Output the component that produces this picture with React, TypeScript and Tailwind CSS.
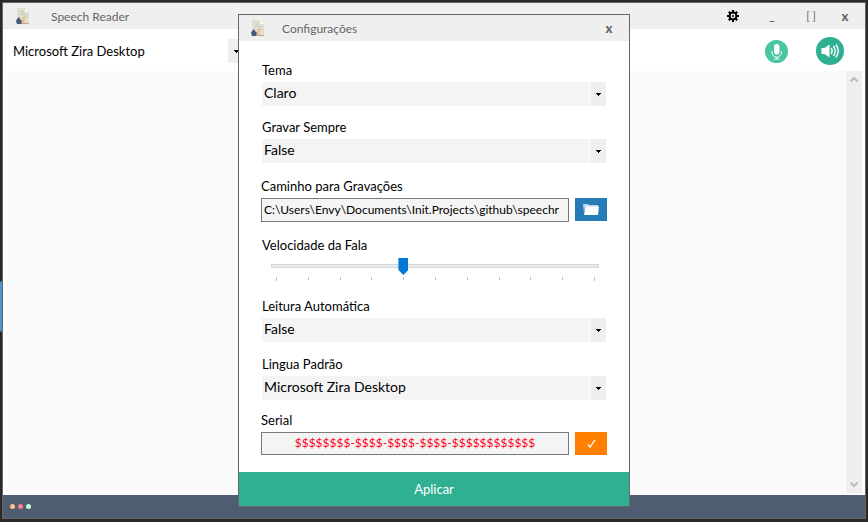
import { useState, type ReactNode } from "react";

const VOICES = ["Microsoft Zira Desktop", "Microsoft David Desktop", "Microsoft Maria Desktop"];
const TICKS = Array.from({ length: 11 }, (_, i) => i);

function AppIcon() {
  return (
    <svg width="14" height="18" viewBox="0 0 14 18" aria-hidden="true">
      <path d="M1 1h8l4 4v12H1z" fill="#dfdfcf" />
      <path d="M9 1l4 4H9z" fill="#f8f8f0" />
      <path d="M4 5h4M4 7.500h7M7 10h4" stroke="#c6cab8" strokeWidth="1" />
      <path d="M6 10l3 0 0 2-1 1 1 3H6z" fill="#efc08a" />
      <path d="M5 16.500h8" stroke="#c9a08a" strokeWidth="1" />
      <path d="M0 14l1-2 2-2 1 2 2 2-1 3H1z" fill="#43597c" />
    </svg>
  );
}

function GearIcon() {
  return (
    <svg width="12" height="12" viewBox="0 0 12 12" aria-hidden="true">
      <g fill="#000">
        <path d="M4.900 0h2.200v12H4.900zM0 4.900h12v2.200H0z" />
        <path d="M4.900 0h2.200v12H4.900zM0 4.900h12v2.200H0z" transform="rotate(45 6 6)" />
      </g>
      <circle cx="6" cy="6" r="3.400" fill="#efefef" stroke="#000" strokeWidth="2" />
      <circle cx="6" cy="6" r="1" fill="#000" />
    </svg>
  );
}

function MicIcon() {
  return (
    <svg width="23" height="23" viewBox="0 0 23 23" aria-hidden="true">
      <circle cx="11.500" cy="11.500" r="11.500" fill="#48c5a1" />
      <rect x="9" y="4" width="5.500" height="10.500" rx="2.750" fill="#fff" />
      <path d="M7 11v1.500a4.700 4.700 0 0 0 9.400 0V11M11.700 17v2M9 19h5.500" fill="none" stroke="#fff" strokeWidth="1" />
    </svg>
  );
}

function SpeakerIcon() {
  return (
    <svg width="28" height="28" viewBox="0 0 28 28" aria-hidden="true">
      <circle cx="14" cy="14" r="14" fill="#30b092" />
      <path d="M5.500 11h3l5-3.500v13L8.500 17h-3z" fill="#fff" />
      <path d="M15.200 11q2 3 0 6M17.500 9q3.500 5 0 10M20 7.500q4.500 6.500 0 13" fill="none" stroke="#fff" strokeWidth="1.400" />
    </svg>
  );
}

function FolderIcon() {
  return (
    <svg width="18" height="13" viewBox="0 0 18 13" aria-hidden="true">
      <path d="M1 1h5l1 1h9v2H3l-1 6z" fill="#b9d6ea" />
      <path d="M3.500 3.500H17l-1 8.500H2z" fill="#fff" />
    </svg>
  );
}

function Combo({ id, options, label, plain }: { id: string; options: string[]; label?: string; plain?: boolean }) {
  return (
    <div className="relative h-6 w-full">
      <select
        id={id}
        aria-label={label}
        className={
          plain
            ? "block h-full w-full appearance-none bg-white px-1 pr-5 text-[13px] leading-5 text-black outline-none"
            : "block h-full w-full appearance-none bg-[#f4f4f4] pb-0.5 pl-0.5 pr-5 text-sm leading-5 text-black outline-none"
        }
      >
        {options.map((o) => (
          <option key={o}>{o}</option>
        ))}
      </select>
      <span className="pointer-events-none absolute inset-y-0 right-0 flex w-[17px] items-center justify-center border-l border-white bg-[#efefef]">
        <svg width="5" height="3" viewBox="0 0 5 3" shapeRendering="crispEdges" aria-hidden="true">
          <path d="M0 0h5v1H4v1H3v1H2V2H1V1H0z" />
        </svg>
      </span>
    </div>
  );
}

function Label({ htmlFor, children }: { htmlFor: string; children: ReactNode }) {
  return (
    <label htmlFor={htmlFor} className="block h-5 text-[13px] leading-4">
      {children}
    </label>
  );
}

function ScrollArrow({ down }: { down?: boolean }) {
  return (
    <svg className={down ? "rotate-180" : ""} width="8" height="7" viewBox="0 0 8 7" aria-hidden="true">
      <path d="M.5 5.500L4 2l3.500 3.500" fill="none" stroke="#bcbcbc" strokeWidth="2.200" />
    </svg>
  );
}

function SettingsDialog() {
  const [speed, setSpeed] = useState(4);
  return (
    <section role="dialog" aria-label="Configurações" className="flex w-[392px] flex-col border border-[#666] bg-white">
      <header className="flex h-[26px] items-center bg-[#efefef] pl-3 pr-3.5 text-[#666]">
        <AppIcon />
        <h2 className="ml-[17px] flex-1 pt-0.5 text-xs leading-4">Configurações</h2>
        <button aria-label="Fechar configurações" className="w-3 text-[13px] font-black leading-4">x</button>
      </header>

      <div className="flex flex-col px-[23px] pb-[17px] pt-[21px]">
        <Label htmlFor="tema">Tema</Label>
        <Combo id="tema" options={["Claro", "Escuro"]} />

        <div className="mt-[13px]">
          <Label htmlFor="gravar">Gravar Sempre</Label>
          <Combo id="gravar" options={["False", "True"]} />
        </div>

        <div className="-mx-px mt-[15px]">
          <Label htmlFor="caminho">Caminho para Gravações</Label>
          <div className="flex gap-1.5">
            <input
              id="caminho"
              className="h-6 min-w-0 flex-1 border border-[#7a7a7a] bg-[#f4f4f4] px-0.5 pb-0.5 text-xs text-black outline-none"
              defaultValue="C:\Users\Envy\Documents\Init.Projects\github\speechr"
            />
            <button aria-label="Escolher pasta" className="flex h-[23px] w-8 items-center justify-center bg-[#257bb6]">
              <FolderIcon />
            </button>
          </div>
        </div>

        <div className="mt-[15px]">
          <Label htmlFor="velocidade">Velocidade da Fala</Label>
          <div className="ml-[9px] mr-[7px]">
            <input
              id="velocidade"
              type="range"
              min={0}
              max={10}
              value={speed}
              onChange={(e) => setSpeed(Number(e.target.value))}
              className="block h-[18px] w-full appearance-none bg-transparent outline-none [&::-webkit-slider-runnable-track]:h-1 [&::-webkit-slider-runnable-track]:border [&::-webkit-slider-runnable-track]:border-[#d6d6d6] [&::-webkit-slider-runnable-track]:bg-[#e7eaea] [&::-webkit-slider-thumb]:-mt-[7px] [&::-webkit-slider-thumb]:h-[17px] [&::-webkit-slider-thumb]:w-2.5 [&::-webkit-slider-thumb]:appearance-none [&::-webkit-slider-thumb]:bg-[#0078d7] [&::-webkit-slider-thumb]:[clip-path:polygon(0_0,100%_0,100%_70%,50%_100%,0_70%)]"
            />
            <div className="mt-0.5 flex h-1 justify-between pl-[5px] pr-1" aria-hidden="true">
              {TICKS.map((t) => (
                <span key={t} className="h-[3px] w-px bg-[#c4c4c4] first:h-1 last:h-1" />
              ))}
            </div>
          </div>
        </div>

        <div className="mt-[17px]">
          <Label htmlFor="leitura">Leitura Automática</Label>
          <Combo id="leitura" options={["False", "True"]} />
        </div>

        <div className="mt-3.5">
          <Label htmlFor="lingua">Lingua Padrão</Label>
          <Combo id="lingua" options={VOICES} />
        </div>

        <div className="-mx-px mt-3">
          <Label htmlFor="serial">Serial</Label>
          <div className="flex gap-1.5">
            <input
              id="serial"
              className="h-[23px] min-w-0 flex-1 border border-[#7a7a7a] bg-[#f4f4f4] pb-0.5 text-center text-xs text-[#ff0020] outline-none"
              defaultValue="$$$$$$$$-$$$$-$$$$-$$$$-$$$$$$$$$$$$"
            />
            <button aria-label="Validar serial" className="flex h-[23px] w-8 items-center justify-center bg-[#ff8000]">
              <svg width="9" height="9" viewBox="0 0 9 9" aria-hidden="true">
                <path d="M1 5.500L3 8 8 .8" fill="none" stroke="#fff" strokeWidth="1.300" />
              </svg>
            </button>
          </div>
        </div>
      </div>

      <button className="h-[34px] bg-[#30b092] text-[13px] leading-4 text-white">Aplicar</button>
    </section>
  );
}

export default function App() {
  return (
    <div className="relative flex h-screen flex-col bg-[#2a2829] px-0.5 pb-[3px] pt-0.5 font-[Lato,Carlito,sans-serif]">
      <span className="absolute left-0 top-[281px] h-[51px] w-0.5 rounded-l-full bg-[#4f95d3]" aria-hidden="true" />
      <main className="flex min-h-0 flex-1 flex-col border border-[#666] bg-white">
        <header className="flex h-[26px] shrink-0 items-center bg-[#efefef] pl-[13px] pr-3.5 text-[#666]">
          <AppIcon />
          <h1 className="ml-[21px] flex-1 pt-0.5 text-xs leading-4">Speech Reader</h1>
          <button aria-label="Configurações" className="mr-7"><GearIcon /></button>
          <button aria-label="Minimizar" className="mr-7 w-2.5 text-xs font-bold leading-4">_</button>
          <button aria-label="Maximizar" className="mr-[22px] w-3 whitespace-nowrap text-[11px] leading-4">[ ]</button>
          <button aria-label="Fechar" className="w-3 text-[13px] font-black leading-4">x</button>
        </header>

        <div className="flex h-[42px] shrink-0 items-center pl-1.5 pr-[21px] pt-0.5">
          <div className="w-[235px]">
            <Combo id="voz" label="Voz" options={VOICES} plain />
          </div>
          <button aria-label="Gravar" className="ml-auto mr-7"><MicIcon /></button>
          <button aria-label="Falar"><SpeakerIcon /></button>
        </div>

        <div className="flex min-h-0 flex-1 bg-white px-[3px] pb-0.5">
          <textarea aria-label="Texto" className="flex-1 resize-none bg-[#fafafa] outline-none" />
          <div className="ml-px flex w-4 flex-col items-center justify-between bg-[#efefef] py-[5px]">
            <ScrollArrow />
            <ScrollArrow down />
          </div>
        </div>

        <footer className="flex h-[23px] shrink-0 items-center gap-[3px] bg-[#4f5d73] pl-[7px]">
          <span className="size-[5px] rounded-full bg-[#ffc191]" />
          <span className="size-[5px] rounded-full bg-[#ff8080]" />
          <span className="size-[5px] rounded-full bg-[#c0ffd8]" />
        </footer>
      </main>

      <div className="absolute inset-0 flex items-center justify-center pb-px">
        <SettingsDialog />
      </div>
    </div>
  );
}
